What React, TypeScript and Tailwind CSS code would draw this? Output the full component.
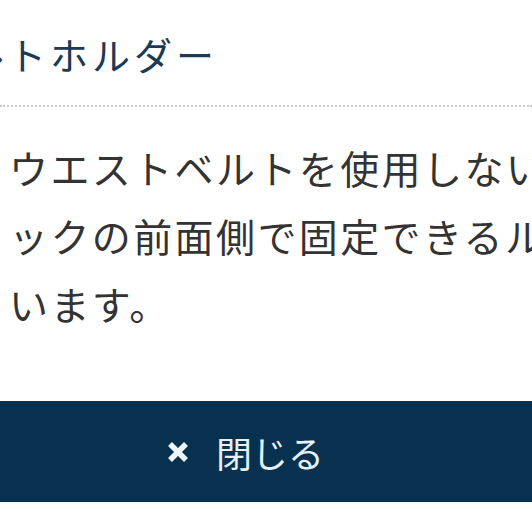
const bodyLines = [
  "ウエストベルトを使用しないときは",
  "ックの前面側で固定できるループが",
  "います。",
];

const CloseIcon = () => (
  <svg width="24" height="22" viewBox="0 0 24 22" aria-hidden="true">
    <path d="M4 3 L20 19 M20 3 L4 19" stroke="#eef5f9" strokeWidth="5.5" strokeLinecap="butt" fill="none" />
  </svg>
);

const App = () => {
  return (
    <div className="w-[532px] h-[532px] overflow-hidden bg-white font-['Noto_Sans_CJK_JP','Noto_Sans',sans-serif]">
      <div className="pt-[30px]">
        <h2 className="ml-[-76px] whitespace-nowrap text-[38px] leading-[48px] tracking-[4px] text-[#1b3a55]">
          ベルトホルダー
        </h2>
      </div>

      <div className="mt-[27px] border-t-2 border-dotted border-[#c9c9c9]" />

      <div className="mt-[26px] pl-[9px] text-[39px] leading-[68px] text-[#333333] tracking-[2.4px]">
        {bodyLines.map((line) => (
          <p key={line} className="whitespace-nowrap">
            {line}
          </p>
        ))}
      </div>

      <button
        type="button"
        className="mt-[64px] flex h-[101px] w-full items-center bg-[#07314f] pl-[166px] text-[#e6f0f5]"
      >
        <CloseIcon />
        <span className="ml-[26px] text-[36px] leading-none">閉じる</span>
      </button>
    </div>
  );
};

export default App;
